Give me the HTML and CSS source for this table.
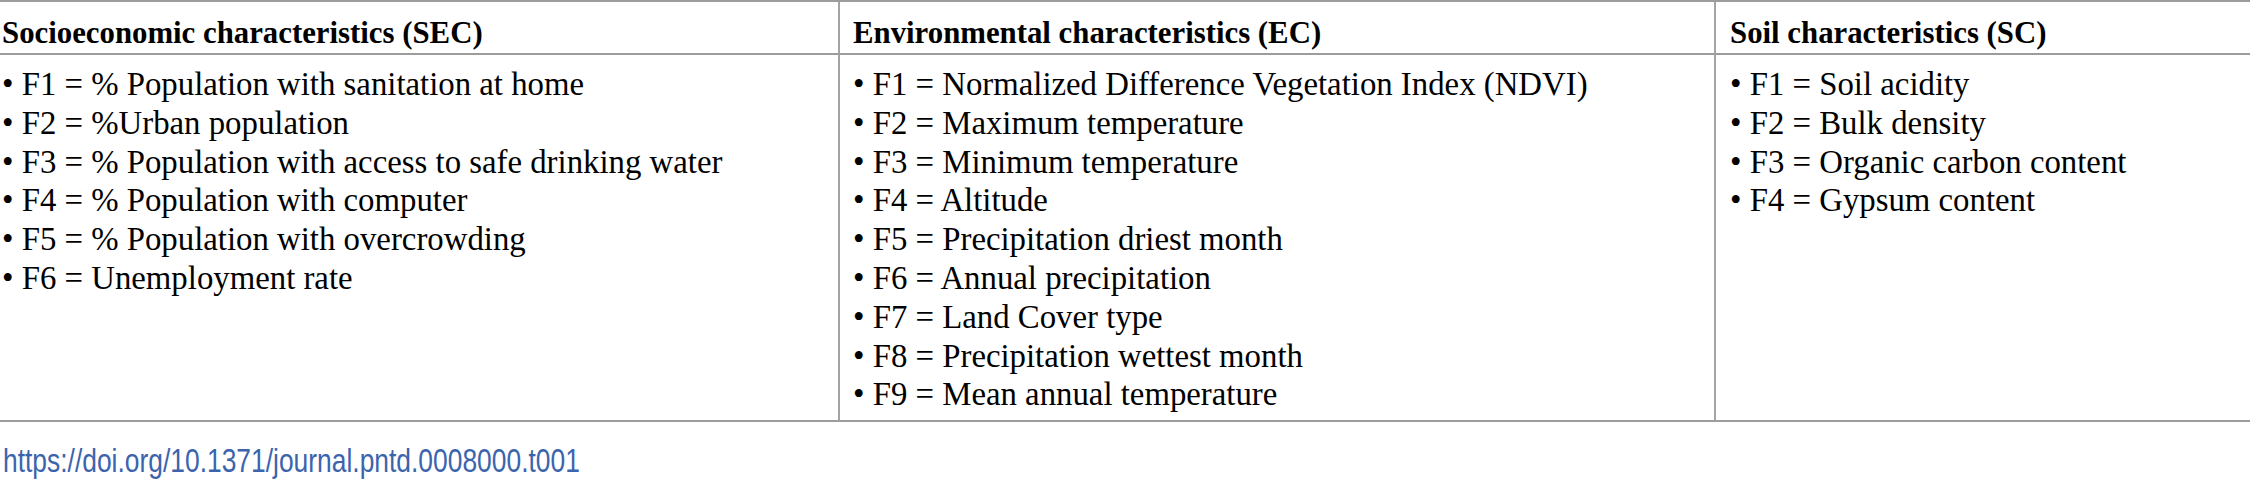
FILE: index.html
```html
<!DOCTYPE html>
<html>
<head>
<meta charset="utf-8">
<link rel="stylesheet" href="styles.css">
</head>
<body>
<div class="page">
  <div class="tbl">
    <div class="cell head c1">Socioeconomic characteristics (SEC)</div>
    <div class="cell head c2">Environmental characteristics (EC)</div>
    <div class="cell head c3">Soil characteristics (SC)</div>
    <div class="cell body c1">
      <div class="item">• F1 = % Population with sanitation at home</div>
      <div class="item">• F2 = %Urban population</div>
      <div class="item">• F3 = % Population with access to safe drinking water</div>
      <div class="item">• F4 = % Population with computer</div>
      <div class="item">• F5 = % Population with overcrowding</div>
      <div class="item">• F6 = Unemployment rate</div>
    </div>
    <div class="cell body c2">
      <div class="item">• F1 = Normalized Difference Vegetation Index (NDVI)</div>
      <div class="item">• F2 = Maximum temperature</div>
      <div class="item">• F3 = Minimum temperature</div>
      <div class="item">• F4 = Altitude</div>
      <div class="item">• F5 = Precipitation driest month</div>
      <div class="item">• F6 = Annual precipitation</div>
      <div class="item">• F7 = Land Cover type</div>
      <div class="item">• F8 = Precipitation wettest month</div>
      <div class="item">• F9 = Mean annual temperature</div>
    </div>
    <div class="cell body c3">
      <div class="item">• F1 = Soil acidity</div>
      <div class="item">• F2 = Bulk density</div>
      <div class="item">• F3 = Organic carbon content</div>
      <div class="item">• F4 = Gypsum content</div>
    </div>
  </div>
  <div class="doi"><a class="doi-link" href="#">https://doi.org/10.1371/journal.pntd.0008000.t001</a></div>
</div>
</body>
</html>
```
FILE: styles.css
```css
html, body {
  margin: 0;
  padding: 0;
  background: #ffffff;
}
.page {
  width: 2250px;
}
.tbl {
  display: grid;
  grid-template-columns: 838px 876px 536px;
  border-top: 2px solid #9c9c9c;
  border-bottom: 2px solid #9c9c9c;
  font-family: "Liberation Serif", "Times New Roman", serif;
  color: #000;
}
.cell {
  box-sizing: border-box;
  padding-left: 2px;
}
.c2 {
  border-left: 2px solid #a4a4a4;
  padding-left: 13px;
}
.c3 {
  border-left: 2px solid #a4a4a4;
  padding-left: 14px;
}
.head {
  font-weight: bold;
  font-size: 30.8px;
  line-height: 36px;
  padding-top: 13px;
  padding-bottom: 2px;
  border-bottom: 2px solid #9c9c9c;
  white-space: nowrap;
}
.body {
  font-size: 32.8px;
  line-height: 38.8px;
  padding-top: 10px;
  padding-bottom: 6px;
}
.item {
  white-space: nowrap;
}
.doi {
  padding-top: 20px;
  padding-left: 3px;
  line-height: 38px;
}
.doi-link {
  display: inline-block;
  font-family: "Liberation Sans", Arial, sans-serif;
  font-size: 33px;
  color: #3c64ad;
  text-decoration: none;
  transform: scaleX(0.8);
  transform-origin: left center;
}
```
